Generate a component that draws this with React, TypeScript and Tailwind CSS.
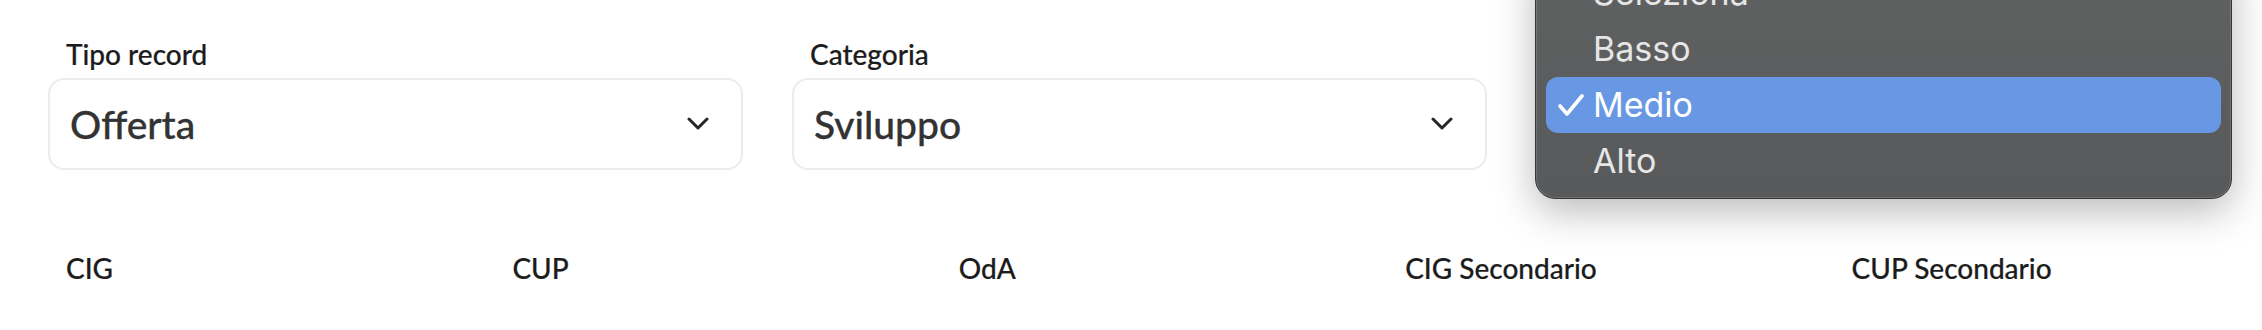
import React from 'react';

const Chevron: React.FC = () => (
  <svg width="22" height="14" viewBox="0 0 22 14" fill="none" className="shrink-0">
    <polyline points="2,2 11,11 20,2" stroke="#262626" strokeWidth="3" strokeLinecap="round" strokeLinejoin="round" />
  </svg>
);

const Field: React.FC<{ label?: string; value?: string; focused?: boolean }> = ({ label, value, focused }) => (
  <div className="flex flex-col">
    <label className="h-[36px] px-[18px] mb-[6px] text-[28px] leading-[36px] font-medium text-[#1c1c1c] [-webkit-text-stroke:0.2px_currentColor]">
      {label}
    </label>
    <div
      className={
        focused
          ? 'h-[92px] flex items-center justify-between pl-[20px] pr-[32px] rounded-[16px] border-2 border-[#1d2748] bg-white'
          : 'h-[92px] flex items-center justify-between pl-[20px] pr-[32px] rounded-[16px] border-2 border-[#ececec] bg-white'
      }
    >
      <span className="text-[39px] leading-[48px] font-medium text-[#333333] [-webkit-text-stroke:0.3px_currentColor]">{value}</span>
      <Chevron />
    </div>
  </div>
);

const options = ['Seleziona', 'Basso', 'Medio', 'Alto'];

const App: React.FC = () => {
  return (
    <div className="w-[2262px] h-[330px] bg-white overflow-hidden pl-[48px] pr-[31px] pt-[36px]" style={{ fontFamily: 'Lato, "Liberation Sans", sans-serif' }}>
      <div className="grid grid-cols-3 gap-x-[49px]">
        <Field label="Tipo record" value="Offerta" />
        <Field label="Categoria" value="Sviluppo" />
        <div className="relative">
          {/* select hidden behind the open popup */}
          <Field focused />
          <div
            className="absolute top-[-81px] left-[-1px] right-[-1px] rounded-[20px] border border-[#363636] bg-gradient-to-b from-[#606161] to-[#58595b] px-[10px] py-[9px] shadow-[inset_0_0_0_1px_rgba(255,255,255,0.14),0_12px_40px_rgba(0,0,0,0.28)]"
            style={{ fontFamily: 'Inter, "Liberation Sans", sans-serif' }}
          >
            {options.map((o) => (
              <div
                key={o}
                className={
                  o === 'Medio'
                    ? 'h-[56px] flex items-center rounded-[12px] bg-[#6898e3] text-white'
                    : 'h-[56px] flex items-center rounded-[12px] text-[#e6e6e6]'
                }
              >
                <span className="w-[47px] flex justify-center pl-[2px]">
                  {o === 'Medio' && (
                    <svg width="26" height="22" viewBox="0 0 26 22" fill="none">
                      <polyline points="2,12 9,20 24,2" stroke="white" strokeWidth="3.6" strokeLinecap="round" strokeLinejoin="round" />
                    </svg>
                  )}
                </span>
                <span className="text-[34px] leading-[56px]">{o}</span>
              </div>
            ))}
          </div>
        </div>
      </div>

      <div className="grid grid-cols-5 gap-x-[49px] mt-[80px]">
        {['CIG', 'CUP', 'OdA', 'CIG Secondario', 'CUP Secondario'].map((l) => (
          <label key={l} className="px-[18px] text-[28px] leading-[36px] font-medium text-[#1c1c1c] [-webkit-text-stroke:0.2px_currentColor]">
            {l}
          </label>
        ))}
      </div>
    </div>
  );
};

export default App;
